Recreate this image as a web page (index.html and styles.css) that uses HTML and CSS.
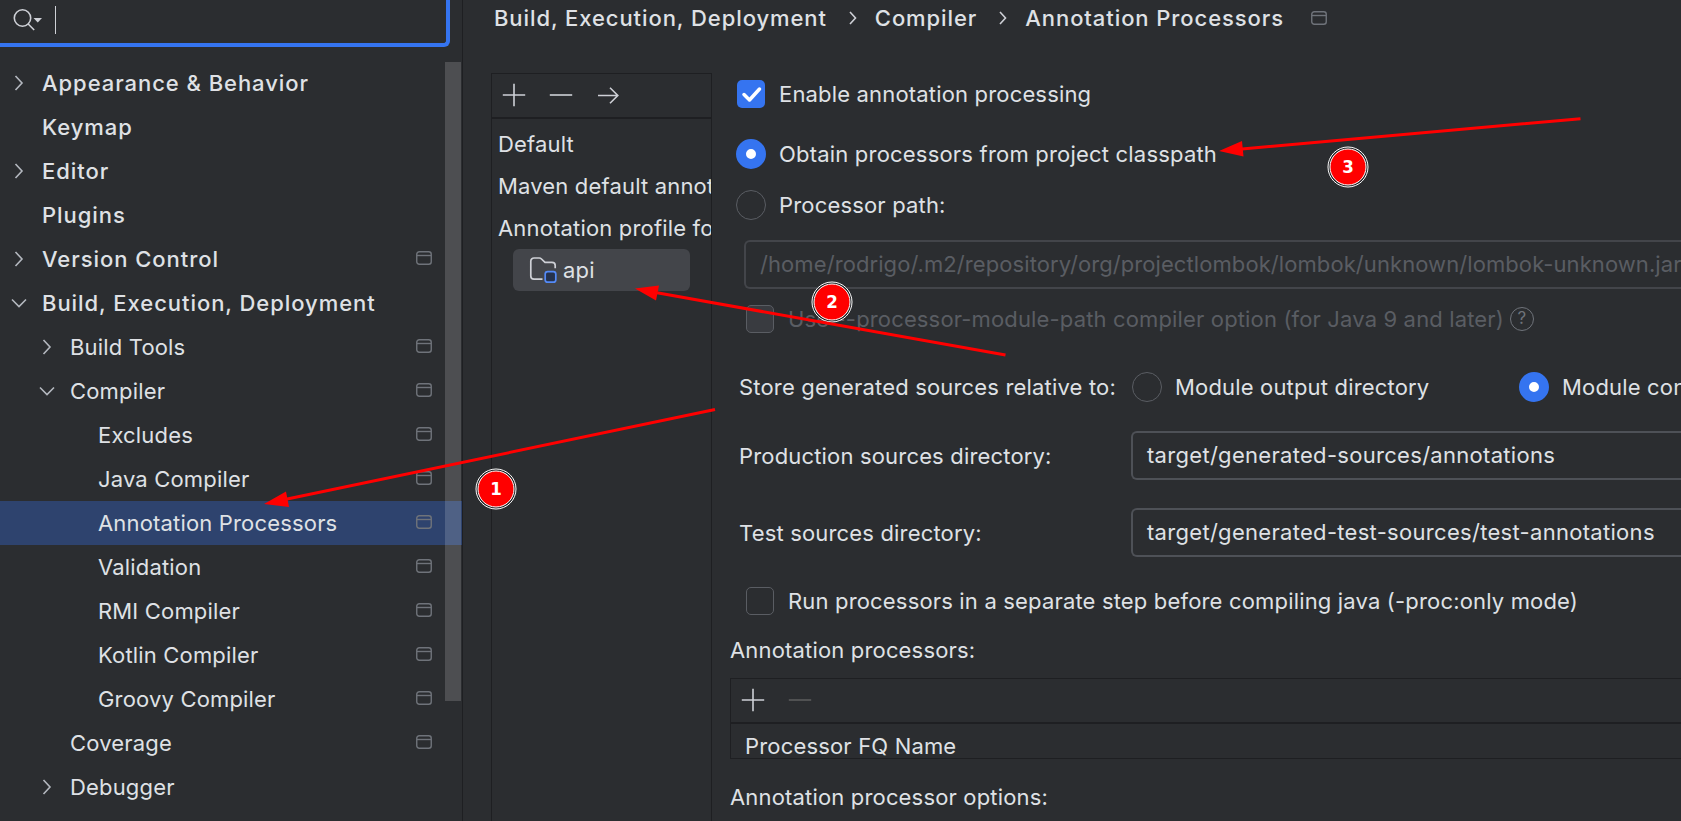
FILE: index.html
```html
<!DOCTYPE html>
<html lang="en">

<head>
    <meta charset="UTF-8">
    <meta name="viewport" content="width=device-width, initial-scale=1.0">
    <title>Settings</title>
    <link rel="stylesheet" href="styles.css">
</head>

<body>

    <!-- shared icons -->
    <svg class="sprite">
        <symbol id="right" viewBox="0 0 20 20"><path d="M6.5 3l6.5 7-6.5 7" /></symbol>
        <symbol id="down" viewBox="0 0 20 20"><path d="M3 6.5l7 7 7-7" /></symbol>
        <symbol id="window" viewBox="0 0 16 14"><rect x=".75" y=".75" width="14.5" height="12.5" rx="2.5" /><path d="M1 4.5h14" /></symbol>
        <symbol id="plus" viewBox="0 0 24 24"><path d="M12 .8v22.4M.8 12h22.4" /></symbol>
        <symbol id="minus" viewBox="0 0 24 24"><path d="M.8 12h22.4" /></symbol>
        <symbol id="crumb" viewBox="0 0 8 14"><path d="M1 1l5.5 6L1 13" /></symbol>
    </svg>

    <div class="settings">
        <aside class="sidebar">
            <div class="search">
                <svg class="search-icon" viewBox="0 0 30 24">
                    <circle cx="9.5" cy="9" r="8.2" />
                    <path d="M15.2 15l6 6" />
                    <path class="solid" d="M20.5 9h8.500l-4.250 4.500z" />
                </svg>
                <span class="caret"></span>
            </div>

            <ul class="tree">
                <li class="group"><svg class="arrow"><use href="#right" /></svg>Appearance &amp; Behavior</li>
                <li class="group"><span class="arrow"></span>Keymap</li>
                <li class="group"><svg class="arrow"><use href="#right" /></svg>Editor</li>
                <li class="group"><span class="arrow"></span>Plugins</li>
                <li class="group"><svg class="arrow"><use href="#right" /></svg>Version Control<svg class="project"><use href="#window" /></svg></li>
                <li class="group"><svg class="arrow"><use href="#down" /></svg>Build, Execution, Deployment</li>
                <li class="level-1"><svg class="arrow"><use href="#right" /></svg>Build Tools<svg class="project"><use href="#window" /></svg></li>
                <li class="level-1"><svg class="arrow"><use href="#down" /></svg>Compiler<svg class="project"><use href="#window" /></svg></li>
                <li class="level-2"><span class="arrow"></span>Excludes<svg class="project"><use href="#window" /></svg></li>
                <li class="level-2"><span class="arrow"></span>Java Compiler<svg class="project"><use href="#window" /></svg></li>
                <li class="level-2 selected"><span class="arrow"></span>Annotation Processors<svg class="project"><use href="#window" /></svg></li>
                <li class="level-2"><span class="arrow"></span>Validation<svg class="project"><use href="#window" /></svg></li>
                <li class="level-2"><span class="arrow"></span>RMI Compiler<svg class="project"><use href="#window" /></svg></li>
                <li class="level-2"><span class="arrow"></span>Kotlin Compiler<svg class="project"><use href="#window" /></svg></li>
                <li class="level-2"><span class="arrow"></span>Groovy Compiler<svg class="project"><use href="#window" /></svg></li>
                <li class="level-1"><span class="arrow"></span>Coverage<svg class="project"><use href="#window" /></svg></li>
                <li class="level-1"><svg class="arrow"><use href="#right" /></svg>Debugger</li>
            </ul>
            <div class="scrollbar"></div>
        </aside>

        <main class="content">
            <div class="breadcrumb">
                <span>Build, Execution, Deployment</span>
                <svg class="crumb"><use href="#crumb" /></svg>
                <span>Compiler</span>
                <svg class="crumb"><use href="#crumb" /></svg>
                <span>Annotation Processors</span>
                <svg class="project"><use href="#window" /></svg>
            </div>

            <div class="columns">
                <section class="profiles">
                    <div class="toolbar">
                        <svg class="tool"><use href="#plus" /></svg>
                        <svg class="tool"><use href="#minus" /></svg>
                        <svg class="tool" viewBox="0 0 24 24"><path d="M2 12.500h20M14 4.800l7.800 7.700L14 20.200" /></svg>
                    </div>
                    <p class="profile">Default</p>
                    <p class="profile">Maven default annotation processors profile</p>
                    <p class="profile">Annotation profile for api</p>
                    <div class="module">
                        <svg class="folder" viewBox="0 0 28 28">
                            <path d="M13.500 23.200H5a3.200 3.200 0 0 1-3.200-3.200V5.200A3.200 3.200 0 0 1 5 2h5.200c.9 0 1.700.4 2.300 1L16 6.400h7a3.200 3.200 0 0 1 3.200 3.200v2.600" />
                            <rect class="badge" x="16.200" y="15.600" width="10.600" height="10.600" rx="2.500" />
                        </svg>
                        api
                    </div>
                </section>

                <section class="form">
                    <label class="option enable"><span class="check on"><svg viewBox="0 0 28 28"><path d="M7 14.500l5.500 5.500L22.500 9" /></svg></span>Enable annotation processing</label>
                    <label class="option obtain"><span class="radio on"></span>Obtain processors from project classpath</label>
                    <label class="option path"><span class="radio"></span>Processor path:</label>
                    <div class="field disabled">/home/rodrigo/.m2/repository/org/projectlombok/lombok/unknown/lombok-unknown.jar</div>
                    <label class="option indent module-path"><span class="check off"></span>Use --processor-module-path compiler option (for Java 9 and later)<span class="help">?</span></label>

                    <div class="line store">
                        <span class="name">Store generated sources relative to:</span>
                        <label class="option output"><span class="radio"></span>Module output directory</label>
                        <label class="option"><span class="radio on"></span>Module content root</label>
                    </div>
                    <div class="line production">
                        <span class="name">Production sources directory:</span>
                        <div class="field">target/generated-sources/annotations</div>
                    </div>
                    <div class="line test">
                        <span class="name">Test sources directory:</span>
                        <div class="field">target/generated-test-sources/test-annotations</div>
                    </div>
                    <label class="option indent separate"><span class="check"></span>Run processors in a separate step before compiling java (-proc:only mode)</label>

                    <h3 class="title">Annotation processors:</h3>
                    <div class="table">
                        <div class="toolbar">
                            <svg class="tool"><use href="#plus" /></svg>
                            <svg class="tool dim"><use href="#minus" /></svg>
                        </div>
                        <p class="header">Processor FQ Name</p>
                    </div>
                    <h3 class="title options">Annotation processor options:</h3>
                </section>
            </div>
        </main>
    </div>

    <!-- numbered steps drawn over the dialog -->
    <svg class="steps" viewBox="0 0 1681 821">
        <circle class="ring" cx="496" cy="489" r="20" />
        <circle class="disc" cx="496" cy="489" r="18" />
        <text x="496" y="495">1</text>
        <circle class="ring" cx="832" cy="302" r="20" />
        <circle class="disc" cx="832" cy="302" r="18" />
        <text x="832" y="308">2</text>
        <circle class="ring" cx="1348" cy="167" r="20" />
        <circle class="disc" cx="1348" cy="167" r="18" />
        <text x="1348" y="173">3</text>
        <path class="shaft" d="M715 409.500L286 499.300M1005.500 355L657 292.800M1580.500 118.700L1242 149" />
        <path class="head" d="M264 504l22-12.500 3 15.500zM635 288.500l24-3-3 15zM1219 151l23-10 1.500 15.500z" />
    </svg>

</body>

</html>
```

FILE: styles.css
```css
* {
    margin: 0;
    padding: 0;
    box-sizing: border-box;
}

body {
    width: 1681px;
    height: 821px;
    overflow: hidden;
    background-color: #2b2d30;
    color: #dfe1e5;
    font-family: 'Inter', sans-serif;
    font-size: 22px;
    letter-spacing: 0.17px;
    line-height: 28px;
    white-space: nowrap;
}

svg {
    fill: none;
    stroke: #ced0d6;
    stroke-width: 1.6;
    flex-shrink: 0;
}

.sprite {
    display: none;
}

.settings {
    display: flex;
    height: 821px;
}

/* sidebar */

.sidebar {
    position: relative;
    width: 463px;
    flex-shrink: 0;
    border-right: 1px solid #1e1f22;
    overflow: hidden;
}

.search {
    display: flex;
    width: 450px;
    height: 47px;
    padding-left: 13px;
    border: solid #3574f0;
    border-width: 0 4px 4px 0;
    border-radius: 0 0 6px 0;
}

.search-icon {
    width: 30px;
    height: 24px;
    margin-top: 9px;
}

.search-icon .solid {
    fill: #ced0d6;
    stroke: none;
}

.caret {
    width: 1px;
    height: 28px;
    margin: 6px 0 0 12px;
    background-color: #ced0d6;
}

.tree {
    margin-top: 14px;
    list-style: none;
}

.tree li {
    display: flex;
    align-items: center;
    height: 44px;
    padding-left: 9px;
    padding-right: 30px;
}

.tree .group {
    font-weight: 500;
    letter-spacing: 0.95px;
}

.tree .level-1 {
    padding-left: 37px;
}

.tree .level-2 {
    padding-left: 65px;
}

.tree .selected {
    background-color: #2e436e;
}

.arrow {
    width: 20px;
    height: 20px;
    margin-right: 13px;
    stroke: #b4b8bf;
}

.project {
    width: 16px;
    height: 14px;
    margin-left: auto;
    stroke: #6f737a;
    stroke-width: 1.4;
}

.tree .project {
    margin-top: -2px;
}

.scrollbar {
    position: absolute;
    top: 62px;
    right: 1px;
    width: 16px;
    height: 639px;
    background-color: rgba(255, 255, 255, 0.16);
}

/* content */

.content {
    flex: 1;
    overflow: hidden;
}

.breadcrumb {
    display: flex;
    align-items: center;
    height: 36px;
    padding-left: 31px;
    font-weight: 500;
    letter-spacing: 0.92px;
}

.crumb {
    width: 8px;
    height: 14px;
    margin: 0 18px 0 22px;
}

.breadcrumb .project {
    margin-left: 27px;
}

.columns {
    display: flex;
    height: 748px;
    margin-top: 37px;
    padding-left: 28px;
}

.profiles {
    width: 221px;
    flex-shrink: 0;
    border: 1px solid #1e1f22;
    border-bottom: none;
    overflow: hidden;
}

.toolbar {
    display: flex;
    align-items: center;
    gap: 23px;
    height: 45px;
    padding: 0 0 2px 10px;
    border-bottom: 2px solid #1e1f22;
}

.tool {
    width: 24px;
    height: 24px;
}

.dim {
    stroke: #5a5b5c;
}

.profiles .toolbar {
    margin-bottom: 4px;
}

.profile {
    height: 42px;
    padding-left: 6px;
    line-height: 42px;
}

.module {
    display: flex;
    align-items: center;
    width: 177px;
    height: 42px;
    margin-left: 21px;
    padding-left: 16px;
    border-radius: 6px;
    background-color: #43454a;
}

.folder {
    width: 28px;
    height: 28px;
    margin-right: 6px;
    stroke-width: 1.7;
}

.folder .badge {
    fill: #25324d;
    stroke: #548af7;
}

/* form */

.form {
    flex: 1;
    padding-left: 18px;
}

.option {
    display: flex;
    align-items: center;
    height: 30px;
    padding-left: 6px;
}

.check,
.radio {
    width: 30px;
    height: 30px;
    margin-right: 13px;
    border: 1.5px solid #5a5d63;
    border-radius: 50%;
    flex-shrink: 0;
}

.check {
    width: 28px;
    height: 28px;
    margin: 0 14px 0 1px;
    border-radius: 5px;
}

.check.on {
    border: none;
    background-color: #3574f0;
}

.check.on svg {
    display: block;
    stroke: #fff;
    stroke-width: 3.5;
    stroke-linecap: round;
    stroke-linejoin: round;
}

.check.off {
    background-color: #393b40;
}

.radio.on {
    border: 10px solid #3574f0;
    background-color: #fff;
}

.enable {
    margin-top: 6px;
}

.obtain {
    margin-top: 30px;
    letter-spacing: 0.2px;
}

.path {
    margin-top: 21px;
}

.field {
    height: 49px;
    padding-left: 14px;
    border: 2px solid #4e5157;
    border-right: none;
    border-radius: 6px 0 0 6px;
    letter-spacing: 0.3px;
    line-height: 45px;
    flex: 1;
}

.field.disabled {
    margin: 20px 0 0 14px;
    border-color: #43454a;
    color: #5a5d63;
    letter-spacing: 0.08px;
}

.indent {
    padding-left: 15px;
}

.module-path {
    margin-top: 15px;
    color: #5a5d63;
    letter-spacing: 0.15px;
}

.help {
    width: 24px;
    height: 24px;
    margin-left: 6px;
    border: 1.5px solid #6f737a;
    border-radius: 50%;
    color: #6f737a;
    font-size: 17px;
    line-height: 21px;
    text-align: center;
}

.line {
    display: flex;
    align-items: center;
    padding-left: 9px;
}

.name {
    width: 392px;
    flex-shrink: 0;
}

.store {
    margin-top: 38px;
}

.store .option {
    padding-left: 1px;
}

.store .output {
    width: 387px;
}

.production {
    margin-top: 29px;
}

.test {
    margin-top: 28px;
}

.separate {
    margin-top: 29px;
}

.title {
    margin-top: 20px;
    font-size: 22px;
    font-weight: 400;
}

.table {
    height: 81px;
    margin-top: 14px;
    border: 1px solid #1e1f22;
    border-right: none;
}

.header {
    padding-left: 14px;
    line-height: 44px;
    height: 34px;
}

.options {
    margin-top: 24px;
}

/* steps */

.steps {
    position: absolute;
    top: 0;
    left: 0;
    width: 1681px;
    height: 821px;
}

.ring {
    fill: #1e1f22;
    stroke: #fff;
    stroke-width: 1;
}

.disc {
    fill: #f00;
    stroke: #fff;
    stroke-width: 1;
}

.steps text {
    fill: #fff;
    stroke: none;
    font-family: 'DejaVu Sans Condensed', 'DejaVu Sans', sans-serif;
    font-size: 18.5px;
    font-weight: 700;
    letter-spacing: 0;
    text-anchor: middle;
}

.shaft {
    stroke: #f00;
    stroke-width: 3;
}

.head {
    fill: #f00;
    stroke: none;
}
```
